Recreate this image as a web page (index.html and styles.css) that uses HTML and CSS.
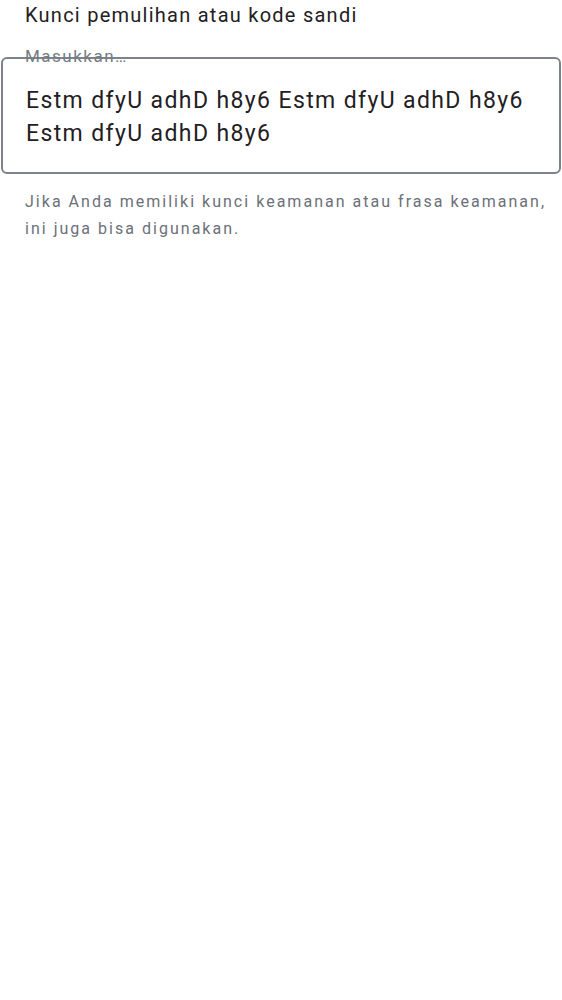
FILE: index.html
```html
<!DOCTYPE html>
<html lang="id">
<head>
<meta charset="utf-8">
<link rel="stylesheet" href="styles.css">
</head>
<body>
<main class="page">
  <h1 class="title">Kunci pemulihan atau kode sandi</h1>
  <div class="field">
    <span class="field-label">Masukkan…</span>
    <div class="field-box">
      <p class="field-value">Estm dfyU adhD h8y6 Estm dfyU adhD h8y6 Estm dfyU adhD h8y6</p>
    </div>
  </div>
  <p class="hint">Jika Anda memiliki kunci keamanan atau frasa keamanan, ini juga bisa digunakan.</p>
</main>
</body>
</html>
```
FILE: styles.css
```css
html, body {
  margin: 0;
  padding: 0;
  background: #ffffff;
}
body {
  font-family: Roboto, "Noto Sans", sans-serif;
  color: #1f2023;
}
.page {
  width: 562px;
}
.title {
  margin: 0;
  padding: 1px 0 0 25px;
  font-size: 20px;
  font-weight: 400;
  line-height: 28px;
  letter-spacing: 1.25px;
  color: #1f2023;
}
.field {
  position: relative;
  margin-top: 28px;
}
.field-label {
  position: absolute;
  left: 25px;
  top: -11px;
  font-size: 17px;
  line-height: 20px;
  letter-spacing: 1.5px;
  color: #757b83;
}
.field-box {
  margin: 0 1px;
  border: 2px solid #7c838c;
  border-radius: 6px;
  padding: 25px 20px 22px 23px;
}
.field-value {
  margin: 0;
  font-size: 23px;
  line-height: 33px;
  letter-spacing: 1.38px;
  color: #1f2023;
}
.hint {
  margin: 14px 0 0;
  padding: 0 10px 0 25px;
  font-size: 16px;
  line-height: 27px;
  letter-spacing: 2.02px;
  color: #6b7079;
}
```
